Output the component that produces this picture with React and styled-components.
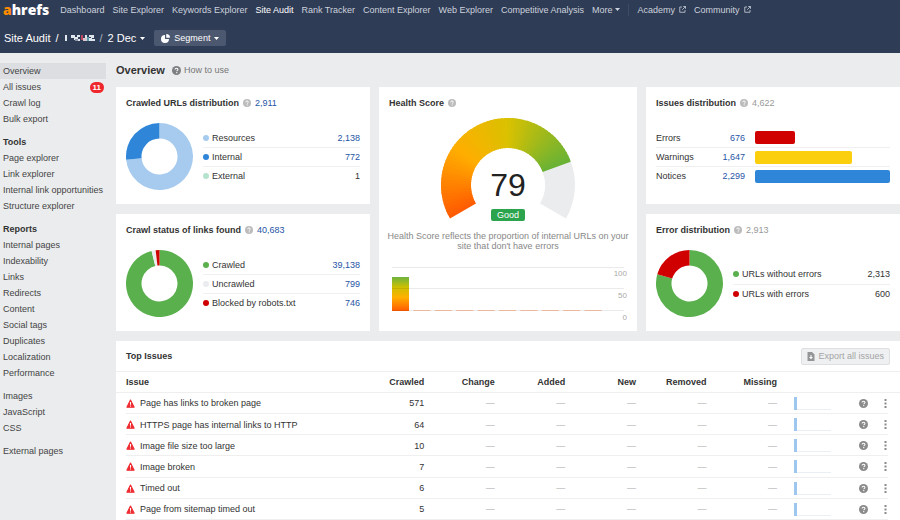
import React from "react";
import styled, { createGlobalStyle } from "styled-components";

const navLinks = [
  "Dashboard",
  "Site Explorer",
  "Keywords Explorer",
  "Site Audit",
  "Rank Tracker",
  "Content Explorer",
  "Web Explorer",
  "Competitive Analysis",
];

const menu = [
  { items: ["Overview", "All issues", "Crawl log", "Bulk export"] },
  {
    title: "Tools",
    items: [
      "Page explorer",
      "Link explorer",
      "Internal link opportunities",
      "Structure explorer",
    ],
  },
  {
    title: "Reports",
    items: [
      "Internal pages",
      "Indexability",
      "Links",
      "Redirects",
      "Content",
      "Social tags",
      "Duplicates",
      "Localization",
      "Performance",
    ],
  },
  { items: ["Images", "JavaScript", "CSS"] },
  { items: ["External pages"] },
];

const crawledUrls = [
  { label: "Resources", value: 2138, color: "#a6cbee" },
  { label: "Internal", value: 772, color: "#2f86d8" },
  { label: "External", value: 1, color: "#b5e3cd" },
];

const crawlStatus = [
  { label: "Crawled", value: 39138, color: "#5bb04e" },
  { label: "Uncrawled", value: 799, color: "#ebecef" },
  { label: "Blocked by robots.txt", value: 746, color: "#d00000" },
];

const errorShare = [
  { label: "URLs without errors", value: 2313, color: "#5bb04e" },
  { label: "URLs with errors", value: 600, color: "#d00000" },
];

const issueLevels = [
  { label: "Errors", value: 676, color: "#d00000" },
  { label: "Warnings", value: 1647, color: "#fbcf0d" },
  { label: "Notices", value: 2299, color: "#2f86d8" },
];

const columns = ["Crawled", "Change", "Added", "New", "Removed", "Missing"];

const issues = [
  { name: "Page has links to broken page", crawled: 571 },
  { name: "HTTPS page has internal links to HTTP", crawled: 64 },
  { name: "Image file size too large", crawled: 10 },
  { name: "Image broken", crawled: 7 },
  { name: "Timed out", crawled: 6 },
  { name: "Page from sitemap timed out", crawled: 5 },
];

const point = (cx, cy, r, deg) => {
  const a = (deg * Math.PI) / 180;
  return `${(cx + r * Math.sin(a)).toFixed(2)} ${(cy - r * Math.cos(a)).toFixed(2)}`;
};

// ring sector, angles run clockwise from twelve o'clock
const sector = (cx, cy, outer, inner, from, to) => {
  const large = to - from > 180 ? 1 : 0;
  return [
    `M${point(cx, cy, outer, from)}`,
    `A${outer} ${outer} 0 ${large} 1 ${point(cx, cy, outer, to)}`,
    `L${point(cx, cy, inner, to)}`,
    `A${inner} ${inner} 0 ${large} 0 ${point(cx, cy, inner, from)}Z`,
  ].join("");
};

const stops = [
  [0, [255, 90, 0]],
  [0.34, [255, 174, 0]],
  [0.63, [218, 193, 0]],
  [1, [103, 178, 54]],
];

const gaugeColor = (t) => {
  const i = stops.findIndex(([at]) => at >= t) || 1;
  const [a, from] = stops[i - 1];
  const [b, to] = stops[i];
  const k = (t - a) / (b - a);
  return `rgb(${from.map((c, n) => Math.round(c + (to[n] - c) * k)).join(",")})`;
};

function Donut({ data }) {
  const total = data.reduce((sum, d) => sum + d.value, 0);
  let angle = 0;
  return (
    <DonutSvg viewBox="0 0 67 67" aria-hidden="true">
      {data.map((d) => {
        const from = angle;
        angle += (d.value / total) * 360;
        return (
          <path
            key={d.label}
            d={sector(33.5, 33.5, 33.5, 18, from, angle)}
            fill={d.color}
          />
        );
      })}
    </DonutSvg>
  );
}

function Gauge({ score }) {
  const end = -120 + (240 * score) / 100;
  const steps = 60;
  const step = (end + 120) / steps;
  return (
    <GaugeBox>
      <svg width="134" height="103" viewBox="0 0 134 103" aria-hidden="true">
        <path d={sector(67, 67, 67, 37, end, 120)} fill="#ebecee" />
        {Array.from({ length: steps }, (_, i) => (
          <path
            key={i}
            d={sector(
              67,
              67,
              67,
              37,
              -120 + i * step,
              Math.min(end, -120 + (i + 1.5) * step)
            )}
            fill={gaugeColor((i + 0.5) / steps)}
          />
        ))}
      </svg>
      <GaugeLabel>
        <Score>{score}</Score>
        <Grade>Good</Grade>
      </GaugeLabel>
    </GaugeBox>
  );
}

function ScoreHistory() {
  return (
    <HistorySvg viewBox="0 0 238 54" aria-hidden="true">
      <defs>
        <linearGradient id="bar" x1="0" y1="0" x2="0" y2="1">
          <stop offset="0" stopColor="#6db33f" />
          <stop offset="0.3" stopColor="#cdc002" />
          <stop offset="0.6" stopColor="#ffb000" />
          <stop offset="1" stopColor="#ff5a00" />
        </linearGradient>
      </defs>
      <rect x="3" y="10" width="17" height="34" fill="url(#bar)" />
      {Array.from({ length: 9 }, (_, i) => (
        <rect
          key={i}
          x={24.4 + i * 21.4}
          y="43"
          width="17"
          height="1"
          fill="#ffc9ab"
        />
      ))}
      <path
        d="M3 .5h232M3 21.500h232M3 43.500h232"
        stroke="#000"
        opacity="0.08"
      />
      {[100, 50, 0].map((n, i) => (
        <text key={n} x="238" y={9 + i * 22} textAnchor="end">
          {n}
        </text>
      ))}
    </HistorySvg>
  );
}

const Help = ({ size = 8, color = "#bcbcbc" }) => (
  <svg width={size} height={size} viewBox="0 0 16 16" aria-hidden="true">
    <circle cx="8" cy="8" r="8" fill={color} />
    <path
      d="M5.4 6.3c0-1.6 1.1-2.5 2.6-2.5s2.6.9 2.6 2.3c0 1.6-2.2 1.7-2.2 3.4"
      fill="none"
      stroke="#fff"
      strokeWidth="1.8"
    />
    <rect x="7.4" y="10.8" width="2" height="2" fill="#fff" />
  </svg>
);

const Caret = () => (
  <svg width="5" height="3" viewBox="0 0 5 3" aria-hidden="true">
    <path d="M0 0h5L2.5 3z" fill="currentColor" />
  </svg>
);

const External = () => (
  <svg width="7" height="7" viewBox="0 0 14 14" aria-hidden="true">
    <path
      d="M6 2H1.5v10.500h10.500V8M8.500 1h4.500v4.500M13 1 6.500 7.500"
      fill="none"
      stroke="currentColor"
      strokeWidth="1.6"
    />
  </svg>
);

const Pie = () => (
  <svg width="9" height="9" viewBox="0 0 18 18" aria-hidden="true">
    <path d="M8 2v8h8a8 8 0 1 1-8-8z" fill="#fff" />
    <path d="M10.500 0a7.500 7.500 0 0 1 7.500 7.500h-7.500z" fill="#fff" />
  </svg>
);

const Warning = () => (
  <svg width="9" height="9" viewBox="0 0 18 18" aria-hidden="true">
    <path
      d="M9 1.500 16.500 16.500h-15z"
      fill="#ee2d32"
      stroke="#ee2d32"
      strokeWidth="2"
      strokeLinejoin="round"
    />
    <path d="M8 6h2v5.500H8zM8 13h2v2H8z" fill="#fff" />
  </svg>
);

const Download = () => (
  <svg width="8" height="9" viewBox="0 0 16 18" aria-hidden="true">
    <path d="M1 0h9l5 5v13H1z" fill="#949597" />
    <path d="M7 6h2v4h3l-4 4.500L4 10h3z" fill="#fff" />
  </svg>
);

const Dots = () => (
  <svg width="3" height="9" viewBox="0 0 3 9" aria-hidden="true">
    <path d="M.5 0h2v2h-2zM.5 3.500h2v2h-2zM.5 7h2v2h-2z" fill="#8b8b8b" />
  </svg>
);

// project name, censored into coarse blocks
const Redacted = () => (
  <svg width="31" height="8" viewBox="0 0 31 8" role="img" aria-label="project">
    <path
      d="M1 1h2v6H1zM7 1h4v3H7zM10 3h4v3h-4zM13 1h3v2h-3zM13 5h3v2h-3zM21 1h2v3h-2zM25 1h5v2h-5zM27 2h3v2h-3zM25 4h3v3h-3zM28 5h3v2h-3z"
      fill="#dfe6ee"
    />
    <path d="M11 5h3v2h-3z" fill="#8b95a5" />
    <path d="M17 1h2v5h-2z" fill="#c0455f" />
    <path d="M19 4h4v3h-4z" fill="#d7c7cf" />
    <path d="M23 3h2v4h-2z" fill="#58a0ad" />
  </svg>
);

function Legend({ data, plainFrom = 99 }) {
  return (
    <List>
      {data.map((d, i) => (
        <ListRow key={d.label}>
          <Dot $color={d.color} />
          <span>{d.label}</span>
          {i >= plainFrom ? (
            <Value>{d.value.toLocaleString("en-US")}</Value>
          ) : (
            <ValueLink href="#urls">{d.value.toLocaleString("en-US")}</ValueLink>
          )}
        </ListRow>
      ))}
    </List>
  );
}

export default function App() {
  return (
    <>
      <GlobalStyle />
      <Header>
        <Nav aria-label="Main">
          <Logo href="#home">
            <span>a</span>hrefs
          </Logo>
          {navLinks.map((name) => (
            <NavLink key={name} href="#nav" $active={name === "Site Audit"}>
              {name}
            </NavLink>
          ))}
          <NavButton type="button">
            More <Caret />
          </NavButton>
          <Divider />
          <NavLink href="#academy">
            Academy <External />
          </NavLink>
          <NavLink href="#community">
            Community <External />
          </NavLink>
        </Nav>
        <Crumbs>
          <a href="#audit">Site Audit</a>
          <span>/</span>
          <Redacted />
          <Faded>/</Faded>
          <DateButton type="button">
            2 Dec <Caret />
          </DateButton>
          <Segment type="button">
            <Pie /> Segment <Caret />
          </Segment>
        </Crumbs>
      </Header>
      <Body>
        <Sidebar aria-label="Site Audit">
          {menu.map((group) => (
            <Group key={group.items[0]}>
              {group.title && <GroupTitle>{group.title}</GroupTitle>}
              {group.items.map((item) => (
                <MenuLink key={item} href="#menu" $active={item === "Overview"}>
                  {item}
                  {item === "All issues" && <Badge>11</Badge>}
                </MenuLink>
              ))}
            </Group>
          ))}
        </Sidebar>
        <Main>
          <Heading>
            <h1>Overview</h1>
            <a href="#help">
              <Help size={9} color="#7d7f82" /> How to use
            </a>
          </Heading>
          <Cards>
            <Card>
              <CardTitle>
                <h2>Crawled URLs distribution</h2>
                <Help />
                <ValueLink href="#urls">2,911</ValueLink>
              </CardTitle>
              <Split>
                <Donut data={crawledUrls} />
                <Legend data={crawledUrls} plainFrom={2} />
              </Split>
            </Card>
            <TallCard>
              <CardTitle>
                <h2>Health Score</h2>
                <Help />
              </CardTitle>
              <Gauge score={79} />
              <Note>
                Health Score reflects the proportion of internal URLs on your
                site that don't have errors
              </Note>
              <ScoreHistory />
            </TallCard>
            <Card>
              <CardTitle>
                <h2>Issues distribution</h2>
                <Help />
                <Total>4,622</Total>
              </CardTitle>
              <Split>
                <List>
                  {issueLevels.map((d) => (
                    <BarRow key={d.label}>
                      <span>{d.label}</span>
                      <ValueLink href="#issues">
                        {d.value.toLocaleString("en-US")}
                      </ValueLink>
                      <Bar
                        $color={d.color}
                        style={{ width: `${(d.value / 2299) * 100}%` }}
                      />
                    </BarRow>
                  ))}
                </List>
              </Split>
            </Card>
            <Card>
              <CardTitle>
                <h2>Crawl status of links found</h2>
                <Help />
                <ValueLink href="#links">40,683</ValueLink>
              </CardTitle>
              <Split>
                <Donut data={crawlStatus} />
                <Legend data={crawlStatus} />
              </Split>
            </Card>
            <Card>
              <CardTitle>
                <h2>Error distribution</h2>
                <Help />
                <Total>2,913</Total>
              </CardTitle>
              <Split>
                <Donut data={errorShare} />
                <Legend data={errorShare} plainFrom={0} />
              </Split>
            </Card>
          </Cards>
          <Panel>
            <PanelHead>
              <h2>Top Issues</h2>
              <Export type="button" disabled>
                <Download /> Export all issues
              </Export>
            </PanelHead>
            <Table>
              <colgroup>
                <col />
                {columns.map((c) => (
                  <NumberCol key={c} />
                ))}
                <TrendCol />
                <HelpCol />
                <MenuCol />
              </colgroup>
              <thead>
                <tr>
                  <th scope="col">Issue</th>
                  {columns.map((c) => (
                    <NumberHead key={c} scope="col">
                      {c}
                    </NumberHead>
                  ))}
                  <td colSpan={3} />
                </tr>
              </thead>
              <tbody>
                {issues.map((issue) => (
                  <IssueRow key={issue.name}>
                    <td>
                      <IssueLink href="#issue">
                        <Warning /> {issue.name}
                      </IssueLink>
                    </td>
                    <NumberCell>{issue.crawled}</NumberCell>
                    {columns.slice(1).map((c) => (
                      <EmptyCell key={c}>—</EmptyCell>
                    ))}
                    <TrendCell>
                      <svg width="37" height="13" aria-hidden="true">
                        <path d="M0 12.500h37" stroke="#e9eff5" />
                        <path d="M0 0h3v13H0z" fill="#9dc7ee" />
                      </svg>
                    </TrendCell>
                    <td>
                      <IconButton type="button" aria-label="About this issue">
                        <Help size={9} color="#8b8b8b" />
                      </IconButton>
                    </td>
                    <td>
                      <IconButton type="button" aria-label="Issue menu">
                        <Dots />
                      </IconButton>
                    </td>
                  </IssueRow>
                ))}
              </tbody>
            </Table>
          </Panel>
        </Main>
      </Body>
    </>
  );
}

const GlobalStyle = createGlobalStyle`
  * {
    box-sizing: border-box;
  }
  body {
    margin: 0;
    background: #ebecee;
    color: #333;
    font: 9px/12px "Liberation Sans", Arial, sans-serif;
  }
  h1, h2, ul, p {
    margin: 0;
    padding: 0;
  }
  h2 {
    font-size: 9px;
  }
  a {
    color: inherit;
    text-decoration: none;
  }
  button {
    margin: 0;
    padding: 0;
    border: 0;
    background: none;
    color: inherit;
    font: inherit;
    white-space: nowrap;
  }
  svg {
    flex: none;
    display: block;
  }
`;

const Header = styled.header`
  background: #2f3c56;
  color: #fff;
  white-space: nowrap;
`;

const Nav = styled.nav`
  display: flex;
  align-items: center;
  gap: 8px;
  height: 19px;
  padding-left: 3px;
`;

const Logo = styled.a`
  margin-right: 3px;
  color: #fff;
  font: 800 14px/18px "Open Sans", sans-serif;
  span {
    color: #ff8b00;
  }
`;

const NavLink = styled.a`
  display: flex;
  align-items: center;
  gap: 4px;
  color: ${(p) => (p.$active ? "#fff" : "#ccd2dc")};
`;

const NavButton = styled.button`
  display: flex;
  align-items: center;
  gap: 3px;
  color: #ccd2dc;
`;

const Divider = styled.span`
  width: 1px;
  height: 12px;
  background: #3f4b63;
`;

const Crumbs = styled.div`
  display: flex;
  align-items: center;
  gap: 5px;
  height: 34px;
  padding: 4px 0 0 4px;
  font-size: 11px;
`;

const Faded = styled.span`
  color: #a9b0bc;
`;

const DateButton = styled.button`
  display: flex;
  align-items: center;
  gap: 4px;
`;

const Segment = styled.button`
  display: flex;
  align-items: center;
  gap: 4px;
  height: 16px;
  margin-left: 4px;
  padding: 0 7px;
  border-radius: 2px;
  background: #4c5870;
  font-size: 9px;
`;

const Body = styled.div`
  display: flex;
`;

const Sidebar = styled.nav`
  display: flex;
  flex-direction: column;
  flex: none;
  gap: 7px;
  width: 106px;
  padding-top: 10px;
`;

const Group = styled.div`
  display: flex;
  flex-direction: column;
`;

const GroupTitle = styled.h2`
  padding-left: 3px;
  line-height: 16px;
`;

const MenuLink = styled.a`
  display: flex;
  align-items: center;
  justify-content: space-between;
  height: 16px;
  padding: 0 2px 0 3px;
  background: ${(p) => (p.$active ? "#dcdee2" : "none")};
  color: #444;
  white-space: nowrap;
`;

const Badge = styled.span`
  padding: 0 3px;
  border-radius: 6px;
  background: #f0262d;
  color: #fff;
  font-size: 8px;
  font-weight: bold;
  line-height: 11px;
`;

const Main = styled.main`
  flex: 1;
  min-width: 0;
  padding-left: 10px;
`;

const Heading = styled.div`
  display: flex;
  align-items: center;
  gap: 7px;
  height: 34px;
  h1 {
    font-size: 11px;
  }
  a {
    display: flex;
    align-items: center;
    gap: 3px;
    color: #777;
  }
`;

const Cards = styled.div`
  display: grid;
  grid-template-columns: 254fr 258fr 254fr;
  gap: 10px 9px;
`;

const Card = styled.section`
  padding: 10px 10px 14px;
  background: #fff;
`;

const TallCard = styled(Card)`
  grid-row: span 2;
  display: flex;
  flex-direction: column;
  padding-bottom: 10px;
`;

const CardTitle = styled.div`
  display: flex;
  align-items: center;
  gap: 4px;
  height: 12px;
  white-space: nowrap;
`;

const Total = styled.span`
  color: #999;
`;

const Value = styled.span`
  margin-left: auto;
`;

const ValueLink = styled.a`
  color: #1f55a5;
`;

const Split = styled.div`
  display: flex;
  align-items: center;
  gap: 10px;
  min-height: 67px;
  margin-top: 14px;
`;

const DonutSvg = styled.svg`
  width: 67px;
  height: 67px;
`;

const List = styled.ul`
  flex: 1;
  list-style: none;
`;

const ListRow = styled.li`
  display: flex;
  align-items: center;
  gap: 3px;
  height: 19px;
  white-space: nowrap;
  & + & {
    border-top: 1px solid #f0f0f1;
  }
  a {
    margin-left: auto;
  }
`;

const Dot = styled.i`
  width: 6px;
  height: 6px;
  border-radius: 50%;
  background: ${(p) => p.$color};
`;

const BarRow = styled.li`
  display: grid;
  grid-template-columns: 36px 43px 1fr;
  align-items: center;
  column-gap: 10px;
  height: 19px;
  & + & {
    border-top: 1px solid #f0f0f1;
  }
  a {
    margin-left: -10px;
    text-align: right;
  }
`;

const Bar = styled.span`
  height: 13px;
  border-radius: 2px;
  background: ${(p) => p.$color};
`;

const GaugeBox = styled.div`
  display: grid;
  justify-items: center;
  margin-top: 9px;
  > * {
    grid-area: 1 / 1;
  }
`;

const GaugeLabel = styled.div`
  display: flex;
  flex-direction: column;
  align-items: center;
  justify-content: flex-end;
  gap: 6px;
`;

const Score = styled.strong`
  color: #222;
  font-size: 32px;
  font-weight: 400;
  line-height: 36px;
`;

const Grade = styled.span`
  padding: 0 6px;
  border-radius: 2px;
  background: #2ca44e;
  color: #fff;
`;

const Note = styled.p`
  margin: 10px -8px 0;
  color: #888;
  line-height: 10px;
  text-align: center;
`;

const HistorySvg = styled.svg`
  width: 238px;
  height: 54px;
  margin-top: 16px;
  text {
    fill: #aaa;
    font-size: 8px;
  }
`;

const Panel = styled.section`
  margin-top: 10px;
  background: #fff;
`;

const PanelHead = styled.div`
  display: flex;
  align-items: center;
  justify-content: space-between;
  height: 31px;
  padding: 0 10px;
  border-bottom: 1px solid #efeff0;
`;

const Export = styled.button`
  display: flex;
  align-items: center;
  gap: 3px;
  height: 17px;
  padding: 0 5px;
  border: 1px solid #dedfe1;
  border-radius: 2px;
  background: #eff0f1;
  color: #a3a4a6;
`;

const Table = styled.table`
  width: 100%;
  height: 148px;
  border-collapse: collapse;
  table-layout: fixed;
  th,
  td {
    padding: 0;
    text-align: left;
    vertical-align: middle;
    white-space: nowrap;
  }
  th:first-child,
  td:first-child {
    padding-left: 10px;
  }
  thead tr {
    height: 20px;
    border-bottom: 1px solid #efeff0;
  }
`;

const NumberCol = styled.col`
  width: 9%;
`;

const TrendCol = styled.col`
  width: 70px;
`;

const HelpCol = styled.col`
  width: 34px;
`;

const MenuCol = styled.col`
  width: 19px;
`;

const NumberHead = styled.th`
  && {
    text-align: right;
  }
`;

const NumberCell = styled.td`
  && {
    text-align: right;
  }
`;

const EmptyCell = styled(NumberCell)`
  color: #aaa;
`;

const TrendCell = styled.td`
  && {
    padding-left: 17px;
  }
`;

const IssueRow = styled.tr`
  background: linear-gradient(#efeff0, #efeff0) 10px 100% / calc(100% - 22px)
    1px no-repeat;
`;

const IssueLink = styled.a`
  display: flex;
  align-items: center;
  gap: 5px;
`;

const IconButton = styled.button`
  display: flex;
  justify-content: center;
  width: 9px;
  margin-left: 12px;
  td:last-child > & {
    margin-left: 0;
  }
`;
